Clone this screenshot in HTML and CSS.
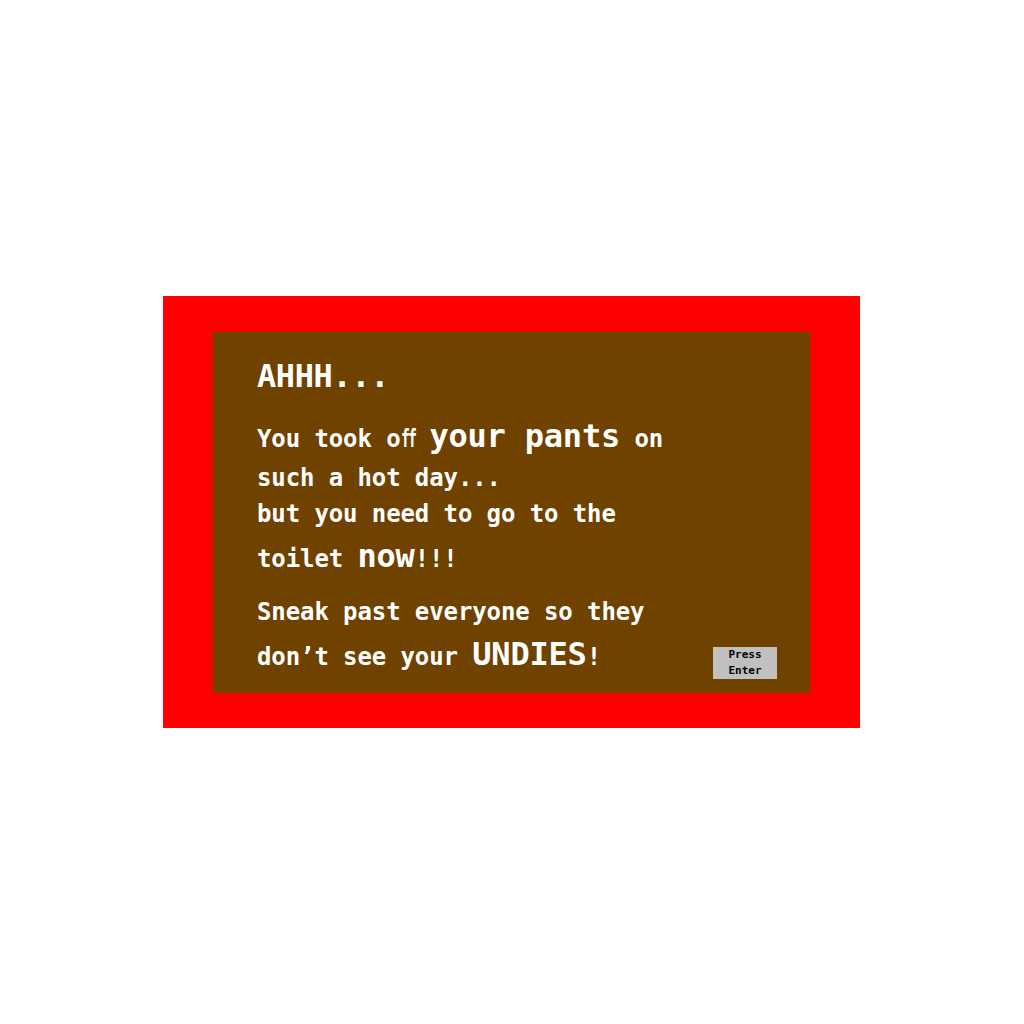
FILE: index.html
```html
<!DOCTYPE html>
<html>
<head>
<meta charset="utf-8">
<link rel="stylesheet" href="styles.css">
</head>
<body>
<div class="frame">
  <div class="panel">
    <div class="story">
      <h1 class="title">AHHH...</h1>
      <p class="para">You took o<span class="lig">ff</span> <span class="big">your pants</span> on<br>such a hot day...<br>but you need to go to the<br>toilet <span class="big">now</span>!!!</p>
      <p class="para para2">Sneak past everyone so they<br>don’t see your <span class="big">UNDIES</span>!</p>
    </div>
    <div class="enter">Press<br>Enter</div>
  </div>
</div>
</body>
</html>
```
FILE: styles.css
```css
html, body {
  margin: 0;
  padding: 0;
  background: #ffffff;
}
body {
  box-sizing: border-box;
  height: 100vh;
  padding-right: 1px;
  display: flex;
  align-items: center;
  justify-content: center;
  font-family: "DejaVu Sans Mono", "Liberation Mono", monospace;
}
.frame {
  box-sizing: border-box;
  width: 697px;
  height: 432px;
  background: #ff0000;
  padding: 36px 50px 35px 50px;
}
.panel {
  box-sizing: border-box;
  width: 597px;
  height: 361px;
  background: #6f4200;
  padding: 24px 33px 14px 44px;
  display: flex;
  justify-content: space-between;
  align-items: flex-end;
}
.story {
  align-self: flex-start;
  color: #ffffff;
  font-weight: bold;
}
.title {
  margin: 0 0 16px 0;
  font-size: 32px;
  line-height: 40px;
  font-weight: bold;
  letter-spacing: -0.4px;
}
.para {
  margin: 0;
  font-size: 24px;
  line-height: 1.5;
  letter-spacing: -0.1px;
}
.para2 {
  margin-top: 14px;
}
.lig {
  display: inline-block;
  letter-spacing: -3px;
  transform: scaleX(0.62);
  transform-origin: left center;
  margin-right: -8.4px;
}
.big {
  font-size: 32px;
  letter-spacing: -0.2px;
}
.enter {
  width: 64px;
  height: 32px;
  background: #c0c0c0;
  color: #000000;
  font-size: 11px;
  line-height: 16px;
  font-weight: bold;
  text-align: center;
}
```
